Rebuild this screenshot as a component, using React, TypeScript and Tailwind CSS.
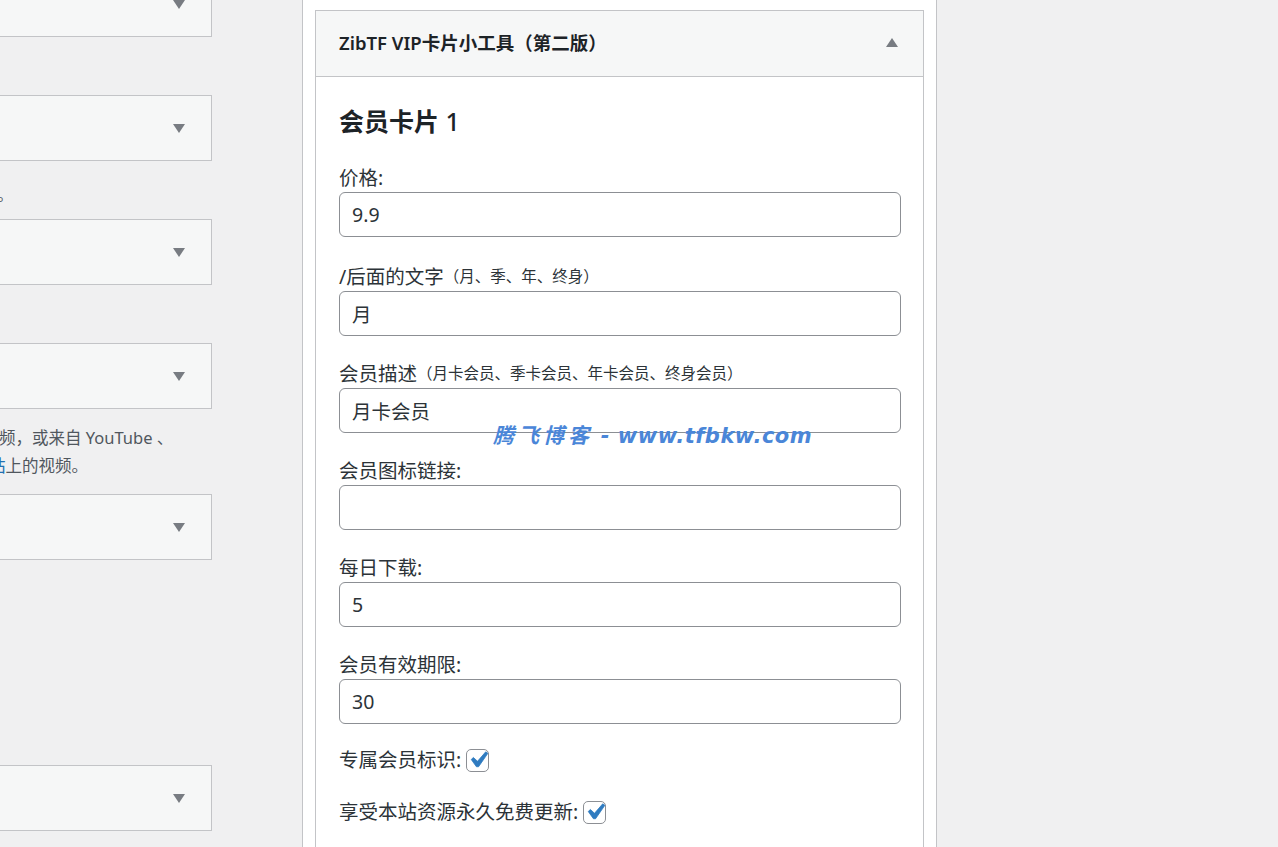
import React from "react";

const fontStack = "font-['Noto_Sans','Noto_Sans_CJK_SC',sans-serif]";

function SideBox({ className = "" }: { className?: string }) {
  return (
    <div
      className={`h-[66px] shrink-0 bg-[#f6f7f7] border border-l-0 border-[#c3c4c7] flex items-center justify-end pr-[26px] ${className}`}
    >
      <svg width="12" height="9" viewBox="0 0 12 9">
        <path d="M0 0h12L6 9z" fill="#787c82" />
      </svg>
    </div>
  );
}

function Field({
  label,
  hint,
  value,
  className = "mb-[24px]",
}: {
  label: string;
  hint?: string;
  value: string;
  className?: string;
}) {
  return (
    <div className={className}>
      <div className="h-[28px] leading-[28px] text-[19.5px] text-[#2c3338] whitespace-nowrap">
        {label}
        {hint && <span className="text-[15.5px] align-top leading-[26px]">{hint}</span>}
      </div>
      <input
        readOnly
        value={value}
        className="block w-full h-[45px] border border-[#8c8f94] rounded-[6px] px-[12px] text-[19.5px] text-[#2c3338] bg-white outline-none"
      />
    </div>
  );
}

function Check({ label }: { label: string }) {
  return (
    <div className="h-[28px] flex items-center text-[19.5px] text-[#2c3338] whitespace-nowrap">
      <span>{label}</span>
      <span className="ml-[5px] w-[23px] h-[23px] border border-[#8c8f94] rounded-[5px] bg-white flex items-center justify-center overflow-visible">
        <svg width="32" height="32" viewBox="0 0 20 20" className="shrink-0 -mx-[5px]">
          <path
            d="M14.83 4.89l1.34.94-5.81 8.38H9.02L5.78 9.67l1.34-1.25 2.57 2.4z"
            fill="#2f7bc0"
            stroke="#2f7bc0"
            strokeWidth="0.5"
            strokeLinejoin="round"
          />
        </svg>
      </span>
    </div>
  );
}

export default function App() {
  return (
    <div
      className={`relative h-[847px] w-[1278px] overflow-hidden bg-[#f0f0f1] ${fontStack}`}
    >
      <div className="flex h-full">
        {/* left widget column */}
        <div className="w-[212px] shrink-0 flex flex-col mt-[-29px]">
          <SideBox />
          <SideBox className="mt-[58px]" />
          <p className="mt-[20px] h-[28px] leading-[28px] text-[16.5px] text-[#50575e] whitespace-nowrap -ml-[3px]">
            。
          </p>
          <SideBox className="mt-[10px]" />
          <SideBox className="mt-[58px]" />
          <div className="mt-[15px] text-[16.5px] leading-[28px] text-[#50575e] whitespace-nowrap">
            <p className="h-[28px] -ml-[1px]">频，或来自 YouTube 、</p>
            <p className="h-[28px] -ml-[11px]">
              <span className="text-[#2271b1]">站</span>上的视频。
            </p>
          </div>
          <SideBox className="mt-[14px]" />
          <SideBox className="mt-[205px]" />
        </div>

        <div className="w-[90px] shrink-0" />

        {/* sidebar column */}
        <div className="w-[635px] shrink-0 h-full bg-white border-x border-[#c3c4c7] px-[12px] pt-[10px]">
          <div className="border border-b-0 border-[#c3c4c7] h-[900px] bg-white">
            <div className="h-[66px] bg-[#f6f7f7] border-b border-[#c3c4c7] flex items-center justify-between pl-[23px] pr-[25px] pb-[2px]">
              <h3 className="text-[18.5px] font-semibold text-[#1d2327]">
                ZibTF VIP卡片小工具（第二版）
              </h3>
              <svg width="12" height="9" viewBox="0 0 12 9">
                <path d="M6 0l6 9H0z" fill="#787c82" />
              </svg>
            </div>
            <div className="pl-[23px] pr-[22px] pt-[27px]">
              <h3 className="h-[34px] leading-[34px] text-[25px] font-bold text-[#1d2327] mb-[26px]">
                会员卡片 <span className="font-medium">1</span>
              </h3>
              <Field label="价格:" value="9.9" className="mb-[26px]" />
              <Field label="/后面的文字" hint="（月、季、年、终身）" value="月" />
              <Field
                label="会员描述"
                hint="（月卡会员、季卡会员、年卡会员、终身会员）"
                value="月卡会员"
              />
              <Field label="会员图标链接:" value="" />
              <Field label="每日下载:" value="5" />
              <Field label="会员有效期限:" value="30" />
              <div className="mt-[-2px] flex flex-col gap-[24px]">
                <Check label="专属会员标识:" />
                <Check label="享受本站资源永久免费更新:" />
              </div>
            </div>
          </div>
        </div>
      </div>

      {/* watermark overlay */}
      <div className="absolute left-[493px] top-[422px] text-[21px] leading-[28px] font-bold italic text-[#4a86d8] whitespace-nowrap font-['DejaVu_Sans','Noto_Sans_CJK_SC',sans-serif]">
        <span className="tracking-[4px]">腾飞博客</span>
        <span className="tracking-[0.5px]"> - www.tfbkw.com</span>
      </div>
    </div>
  );
}
